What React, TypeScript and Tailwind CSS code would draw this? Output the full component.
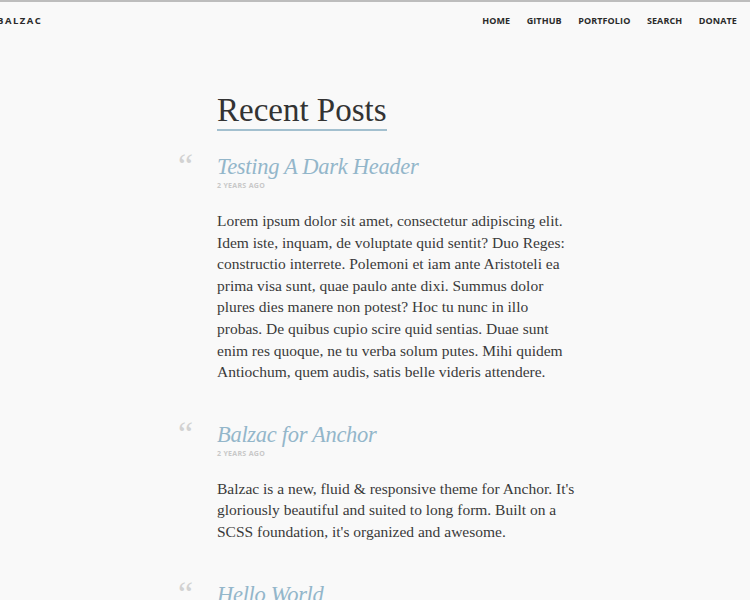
import React from "react";

const serif = { fontFamily: '"Liberation Serif", "DejaVu Serif", serif' };

const post1 = [
  "Lorem ipsum dolor sit amet, consectetur adipiscing elit.",
  "Idem iste, inquam, de voluptate quid sentit? Duo Reges:",
  "constructio interrete. Polemoni et iam ante Aristoteli ea",
  "prima visa sunt, quae paulo ante dixi. Summus dolor",
  "plures dies manere non potest? Hoc tu nunc in illo",
  "probas. De quibus cupio scire quid sentias. Duae sunt",
  "enim res quoque, ne tu verba solum putes. Mihi quidem",
  "Antiochum, quem audis, satis belle videris attendere.",
];

const post2 = [
  "Balzac is a new, fluid & responsive theme for Anchor. It's",
  "gloriously beautiful and suited to long form. Built on a",
  "SCSS foundation, it's organized and awesome.",
];

function Post({ title, lines }: { title: string; lines?: string[] }) {
  return (
    <article className="flex">
      <div className="w-[39px] shrink-0 text-[34px] leading-none text-[#d2d2d2] -mt-[4px]" style={serif}>
        “
      </div>
      <div className="w-[360px]">
        <h2 className="text-[22.5px] leading-[28px] italic text-[#93b6ca] tracking-[-0.3px]" style={serif}>
          {title}
        </h2>
        <div
          className="text-[7px] font-bold tracking-[0.3px] text-[#c8c8c8] uppercase leading-[10px]"
          style={{ fontFamily: '"Open Sans", sans-serif' }}
        >
          2 years ago
        </div>
        {lines && (
          <p className="mt-[19px] text-[15.5px] leading-[21.6px] text-[#3a3a3a]" style={serif}>
            {lines.map((l, i) => (
              <span key={i} className="block whitespace-nowrap">
                {l}
              </span>
            ))}
          </p>
        )}
      </div>
    </article>
  );
}

export default function App() {
  return (
    <div className="bg-[#f9f9f9] border-t-2 border-[#bdbdbd] overflow-hidden h-[600px]">
      <header
        className="flex items-center justify-between h-[38px] pr-[13px] pl-0"
        style={{ fontFamily: '"Open Sans", sans-serif' }}
      >
        <div className="text-[9.5px] font-bold tracking-[1.5px] text-[#2a2a2a] -ml-[3px]">BALZAC</div>
        <nav className="flex gap-[16.5px] text-[9px] font-bold text-[#2a2a2a] tracking-[0.1px]">
          <span>HOME</span>
          <span>GITHUB</span>
          <span>PORTFOLIO</span>
          <span>SEARCH</span>
          <span>DONATE</span>
        </nav>
      </header>
      <main className="pl-[178px] pt-[52px]">
        <div className="pl-[39px]">
          <h1
            className="inline-block text-[33px] leading-[36px] text-[#333] border-b-2 border-[#a3c0cf] pb-[1px]"
            style={serif}
          >
            Recent Posts
          </h1>
        </div>
        <div className="mt-[22px] flex flex-col gap-[38px]">
          <Post title="Testing A Dark Header" lines={post1} />
          <Post title="Balzac for Anchor" lines={post2} />
          <Post title="Hello World" />
        </div>
      </main>
    </div>
  );
}
